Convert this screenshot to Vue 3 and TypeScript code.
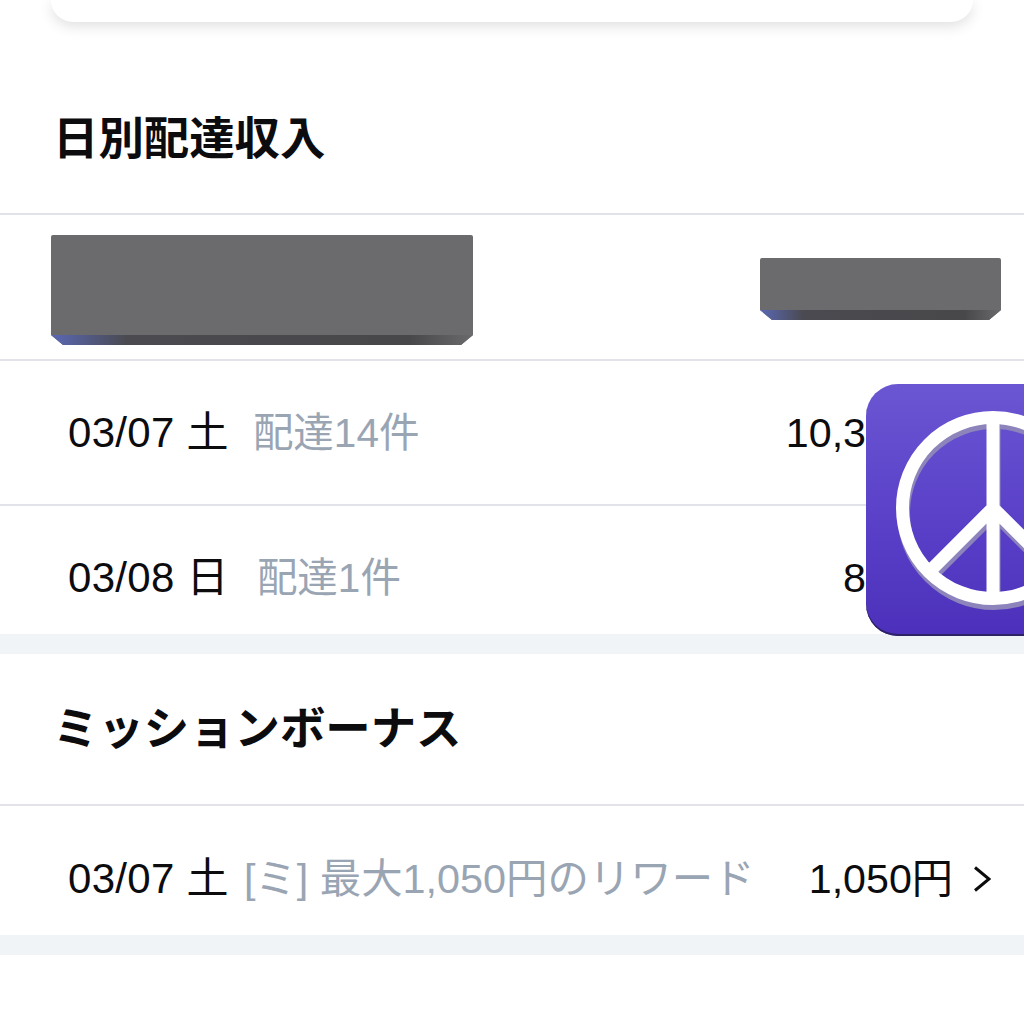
<script setup lang="ts">
  // 日別の配達収入
  const deliveries = [
    { date: "03/07 土", note: "配達14件", amount: "10,390円" },
    { date: "03/08 日", note: "配達1件", amount: "850円" },
  ];
  const bonus = { date: "03/07 土", note: "[ミ] 最大1,050円のリワード", amount: "1,050円" };
</script>

<template>
  <div class="page">
    <div class="summary-card"></div>

    <h2 class="section-title daily-title">日別配達収入</h2>

    <div class="redacted-row">
      <div class="redacted large"><span class="bevel"></span></div>
      <div class="redacted small"><span class="bevel"></span></div>
    </div>

    <div v-for="item in deliveries" :key="item.date" class="row delivery">
      <span class="date">{{ item.date }}</span>
      <span class="note">{{ item.note }}</span>
      <span class="amount">{{ item.amount }}</span>
      <svg class="chevron" viewBox="0 0 18 26"><path d="M2 1.5 16 13 2 24.5" /></svg>
    </div>

    <div class="band"></div>

    <h2 class="section-title mission-title">ミッションボーナス</h2>

    <div class="row bonus">
      <span class="date">{{ bonus.date }}</span>
      <span class="note">{{ bonus.note }}</span>
      <span class="amount">{{ bonus.amount }}</span>
      <svg class="chevron" viewBox="0 0 18 26"><path d="M2 1.5 16 13 2 24.5" /></svg>
    </div>

    <div class="band"></div>

    <!-- 画面に重なるアプリアイコン -->
    <div class="app-icon">
      <svg viewBox="0 0 254 252" width="254" height="252">
        <g class="peace-shade" transform="translate(1 5)">
          <circle cx="127" cy="124" r="90.5" />
          <path d="M127 34V214M127 124 63 188M127 124 191 188" />
        </g>
        <g class="peace">
          <circle cx="127" cy="124" r="90.5" />
          <path d="M127 34V214M127 124 63 188M127 124 191 188" />
        </g>
      </svg>
    </div>
  </div>
</template>

<style scoped>
  .page {
    position: relative;
    width: 1024px;
    height: 1024px;
    overflow: hidden;
    background: #fff;
    color: #0c0c0e;
    font-family: "Liberation Sans", "Noto Sans CJK JP", sans-serif;
  }

  .summary-card {
    height: 22px;
    margin: 0 51px;
    background: #fff;
    border-radius: 0 0 22px 22px;
    box-shadow: 0 4px 14px rgba(0, 0, 0, 0.13);
  }

  .section-title {
    margin: 0;
    padding-left: 53px;
    font-size: 45.4px;
    line-height: 60px;
    font-weight: 700;
  }

  .daily-title {
    padding-top: 88px;
    padding-bottom: 43px;
  }

  .mission-title {
    padding-top: 46px;
    padding-bottom: 44px;
  }

  .redacted-row {
    display: flex;
    align-items: flex-start;
    justify-content: space-between;
    height: 146px;
    padding: 20px 23px 0 51px;
    border-top: 2px solid #e1e2ea;
    box-sizing: border-box;
  }

  .redacted {
    position: relative;
    overflow: hidden;
    background: #6b6b6d;
    clip-path: polygon(0 0, 100% 0, 100% calc(100% - 10px), calc(100% - 12px) 100%, 12px 100%, 0 calc(100% - 10px));
    border-radius: 2px 2px 0 0;
  }

  .redacted.large {
    width: 422px;
    height: 110px;
  }

  .redacted.small {
    width: 241px;
    height: 62px;
    margin-top: 23px;
  }

  .bevel {
    position: absolute;
    left: 0;
    right: 0;
    bottom: 0;
    height: 10px;
    background: linear-gradient(90deg, #5a68b4 0, #4a4a50 18%, #48484a 85%, #6a6a6c 100%);
  }

  .row {
    display: flex;
    align-items: flex-start;
    box-sizing: border-box;
    border-top: 2px solid #e1e2ea;
    white-space: nowrap;
    overflow: hidden;
    line-height: 144px;
  }

  .delivery {
    height: 130px;
  }

  .delivery:nth-of-type(3) {
    height: 145px;
  }

  .delivery:nth-of-type(4) .note {
    margin-left: 28px;
  }

  .bonus {
    height: 131px;
    line-height: 146px;
  }

  .date {
    margin-left: 68px;
    font-size: 42px;
    letter-spacing: 0.3px;
  }

  .note {
    margin-left: 24px;
    font-size: 40.5px;
    color: #9aa5b4;
  }

  .bonus .note {
    margin-left: 15px;
    font-size: 41.4px;
  }

  .amount {
    margin-left: auto;
    font-size: 41.2px;
  }

  .chevron {
    flex: none;
    width: 18px;
    height: 26px;
    margin: 59px 33px 0 20px;
    fill: none;
    stroke: #0c0c0e;
    stroke-width: 3;
  }

  .bonus .chevron {
    margin-top: 60px;
  }

  .band {
    height: 20px;
    background: #f1f4f7;
  }

  .app-icon {
    position: absolute;
    left: 866px;
    top: 384px;
    width: 254px;
    height: 252px;
    border-radius: 32px;
    overflow: hidden;
    background: linear-gradient(180deg, #6b56d2 0%, #5b42c9 50%, #4c30bb 100%);
    box-shadow: inset 0 -2px 0 #2e2266;
  }

  .peace,
  .peace-shade {
    fill: none;
    stroke-width: 13;
  }

  .peace {
    stroke: #fff;
  }

  .peace-shade {
    stroke: #8d84bb;
  }
</style>

<style>
  body {
    background: #fff;
  }
</style>
